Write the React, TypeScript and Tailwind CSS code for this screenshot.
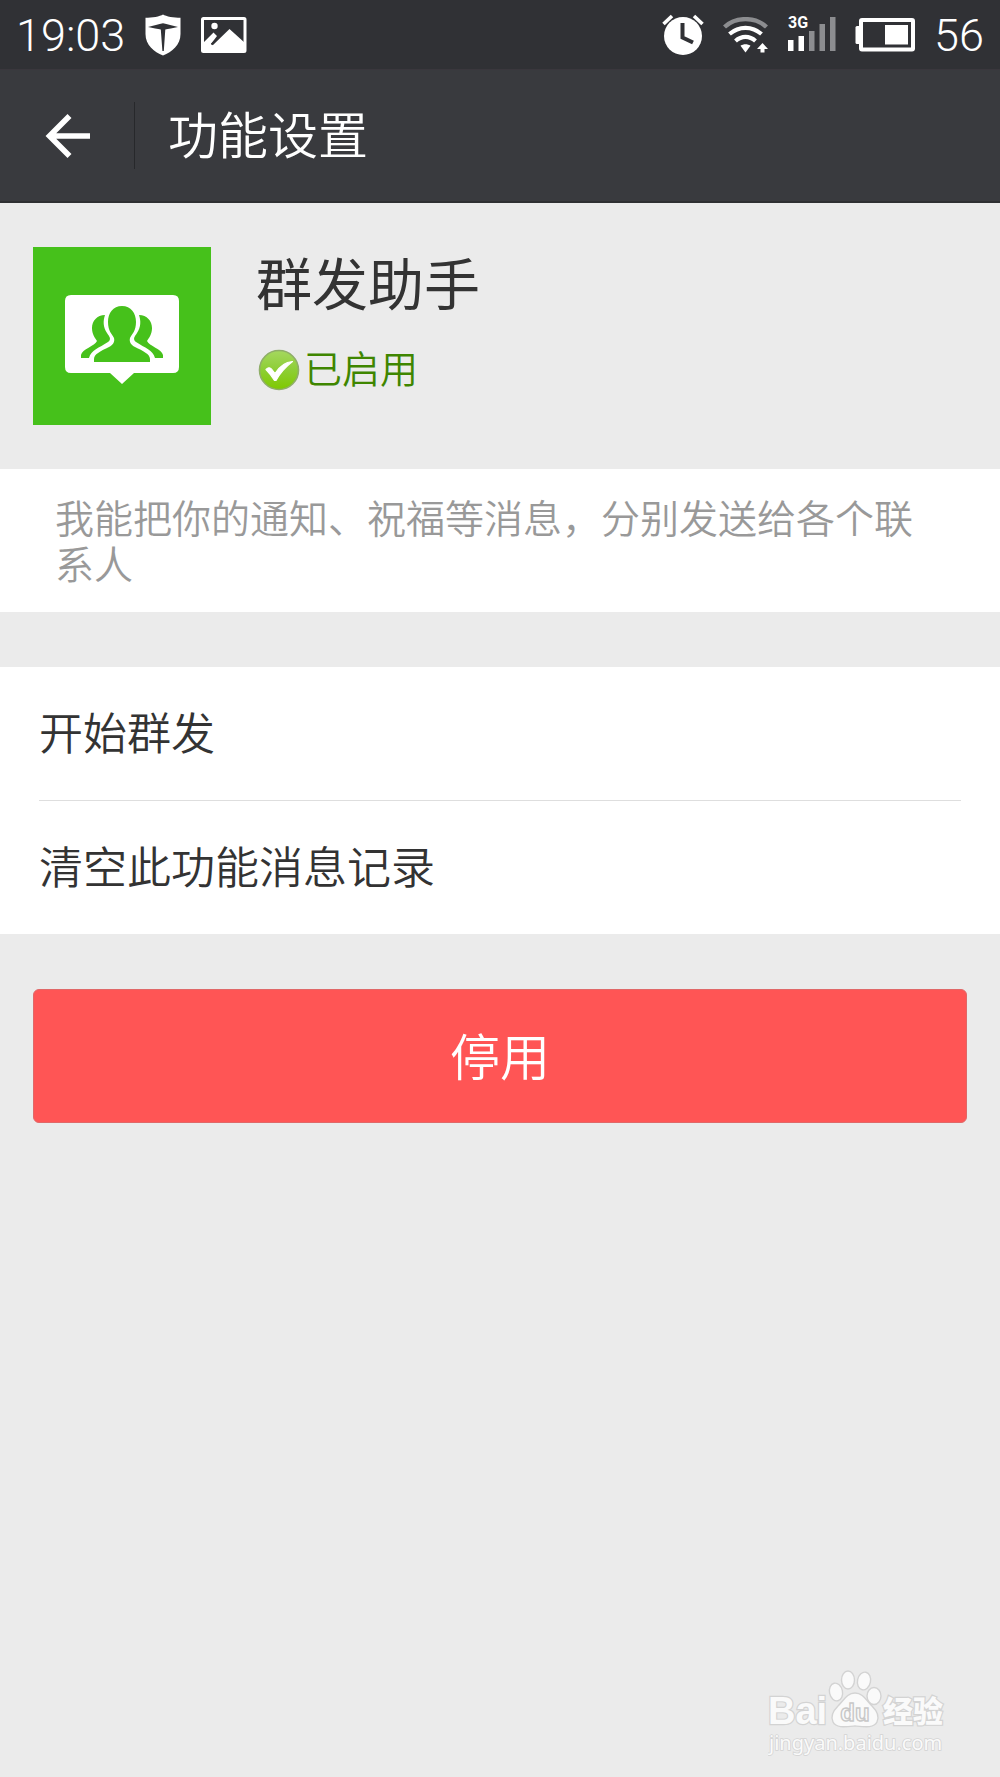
import React from 'react';

interface MenuItem {
  id: string;
  label: string;
}

const menuItems: MenuItem[] = [
  { id: 'start', label: '开始群发' },
  { id: 'clear', label: '清空此功能消息记录' },
];

const ShieldIcon = () => (
  <svg className="h-[42px] w-9" viewBox="0 0 36 42" fill="none">
    <path d="M18 0.5C21 2.5 29 3.8 35.5 3.8V20C35.5 31 27 38 18 41.5C9 38 0.5 31 0.5 20V3.8C7 3.8 15 2.5 18 0.5Z" fill="#fff" />
    <path d="M3 13C8 11.5 14 10.2 18 9.2C22 10.2 28 11.5 33 13C28 14.2 23 15 20.3 15.6L18.8 37H17.4L15.8 15.6C13 15 8 14.2 3 13Z" fill="#303135" />
  </svg>
);

const PictureIcon = () => (
  <svg className="h-9 w-[46px]" viewBox="0 0 46 36" fill="none">
    <rect x="1.5" y="1.5" width="42.5" height="33" rx="1" stroke="#fff" strokeWidth="3" />
    <circle cx="13.5" cy="9" r="3.2" fill="#fff" />
    <path d="M2 26L12.5 15.5L16 19L10 27L12 28L28.5 12L44 26V34H2Z" fill="#fff" />
    <path d="M10.5 27.5L18 20" stroke="#303135" strokeWidth="1.8" />
  </svg>
);

const AlarmIcon = () => (
  <svg className="h-[42px] w-[42px]" viewBox="0 0 42 42" fill="none">
    <circle cx="21" cy="22" r="19" fill="#fff" />
    <path d="M1.5 10L10 2M32 2L40.5 10" stroke="#fff" strokeWidth="3.6" />
    <path d="M20.5 9V23.5L31 28.5" stroke="#303135" strokeWidth="4" />
  </svg>
);

const WifiIcon = () => (
  <svg className="h-9 w-[46px]" viewBox="0 0 46 36" fill="none">
    <path d="M1.5 10C13 -0.5 32 -0.5 43.5 10" stroke="#8c8d90" strokeWidth="4.4" />
    <path d="M6.5 17C16 8.8 29 8.8 38.5 17" stroke="#fff" strokeWidth="4.2" />
    <path d="M12.5 24C18.5 18.6 26.5 18.6 32.5 24" stroke="#fff" strokeWidth="4.2" />
    <path d="M17.5 28.8C20.5 26.8 24.5 26.8 27.5 28.8L22.5 35.5Z" fill="#fff" />
    <path d="M39.5 26L45 32H41.5V35.5H37.5V32H34Z" fill="#fff" />
  </svg>
);

const SignalIcon = () => (
  <svg className="h-12 w-12" viewBox="0 -4 48 48" fill="none">
    <text x="0" y="13" fill="#fff" fontFamily="'Roboto', sans-serif" fontSize="16" fontWeight="700">3G</text>
    <path d="M0 25H5.5V36H0ZM10.5 21H16V36H10.5Z" fill="#fff" />
    <path d="M21 16H26.5V36H21ZM31.5 9H37V36H31.5ZM42 2H47.5V36H42Z" fill="#8c8d90" />
  </svg>
);

const BatteryIcon = () => (
  <svg className="h-[34px] w-[60px]" viewBox="0 0 60 34" fill="none">
    <rect x="6" y="2" width="52" height="29.5" rx="1" stroke="#fff" strokeWidth="4" />
    <path d="M0.5 9.5Q0.5 8 2 8H5V26H2Q0.5 26 0.5 24.5Z" fill="#fff" />
    <path d="M30 7H53V26.5H30Z" fill="#fff" />
  </svg>
);

const StatusBar = () => (
  <div className="flex h-[70px] items-center justify-between border-b border-[#3a373d] bg-[#303135] px-4 font-['Roboto',sans-serif] text-[45px] leading-none font-light text-white">
    <div className="flex items-center gap-5">
      <span className="pt-0.5">19:03</span>
      <ShieldIcon />
      <PictureIcon />
    </div>
    <div className="flex items-center gap-[19px]">
      <AlarmIcon />
      <WifiIcon />
      <SignalIcon />
      <BatteryIcon />
      <span className="pt-0.5">56</span>
    </div>
  </div>
);

const Header = () => (
  <header className="flex h-[133px] items-center border-b-2 border-[#2e2f32] bg-[#393a3e]">
    <button type="button" aria-label="返回" className="flex h-full w-[134px] items-center justify-center">
      <svg className="h-[46px] w-[46px]" viewBox="0 0 46 46" fill="none">
        <path d="M25.5 3L5.5 23L25.5 43M6 23H46" stroke="#fff" strokeWidth="5.6" />
      </svg>
    </button>
    <div className="h-[67px] w-px bg-[#27282b]" />
    <h1 className="pb-2 pl-[33px] text-[50px] leading-none font-[350] text-white">功能设置</h1>
  </header>
);

const GroupIcon = () => (
  <svg className="h-[178px] w-[178px] shrink-0 bg-[#46c11b]" viewBox="0 0 178 178">
    <path d="M38 48H140Q146 48 146 54V120Q146 126 140 126H101L89 137L77 126H38Q32 126 32 120V54Q32 48 38 48Z" fill="#fff" />
    <g fill="#46c11b">
      <path d="M72 68C64 68 59 74 59 81C59 87 62 91 64 94C62 99 49 102 48 108V111H56C58 103 66 101 75 95C79 92 76 89 74 86C70 80 70 74 72 68Z" />
      <path d="M106 68C114 68 119 74 119 81C119 87 116 91 114 94C116 99 129 102 130 108V111H122C120 103 112 101 103 95C99 92 102 89 104 86C108 80 108 74 106 68Z" />
      <path d="M89 59C80 59 75 66 75 75C75 84 79 87 81 91C82 95 80 98 76 100C68 104 61 107 61 112V115H117V112C117 107 110 104 102 100C98 98 96 95 97 91C99 87 103 84 103 75C103 66 98 59 89 59Z" />
    </g>
  </svg>
);

const CheckIcon = () => (
  <svg className="h-[42px] w-[42px]" viewBox="0 0 42 42" fill="none">
    <defs>
      <linearGradient id="checkFill" x1="0" y1="0" x2="0" y2="1">
        <stop offset="0" stopColor="#a5d85f" />
        <stop offset="0.5" stopColor="#8dce35" />
        <stop offset="1" stopColor="#7fc900" />
      </linearGradient>
    </defs>
    <circle cx="21" cy="21" r="19.5" fill="url(#checkFill)" stroke="#8fae68" strokeWidth="1.6" />
    <path d="M8 20.5C10 18.5 12 18 13.5 20L17 24.5C21 18 27 13 34.5 12.5C28 17.5 22 24 18 31.5H16.5C14 27.5 11.5 24 8 20.5Z" fill="#fff" stroke="#fff" strokeWidth="1.2" strokeLinejoin="round" />
  </svg>
);

const Watermark = () => (
  <svg className="h-[92px] w-[180px]" viewBox="0 0 180 92" fill="#fafafa" stroke="#d3d3d3" strokeWidth="1.4">
    <text x="0" y="55" fontFamily="'Liberation Sans', Arial, sans-serif" fontSize="38" fontWeight="700" strokeWidth="2.4" paintOrder="stroke">Bai</text>
    <ellipse cx="68" cy="23" rx="6.5" ry="9" transform="rotate(-12 68 23)" />
    <ellipse cx="80" cy="11" rx="6.5" ry="9" />
    <ellipse cx="96" cy="12" rx="6.5" ry="9" transform="rotate(12 96 12)" />
    <ellipse cx="106" cy="27" rx="7" ry="8.5" />
    <path d="M87 24C95 24 98 31 104 37C109 42 112 47 109 53C106 59 98 58 87 57C76 58 68 59 65 53C62 47 65 42 70 37C76 31 79 24 87 24Z" />
    <text x="87" y="52" textAnchor="middle" fontFamily="'Liberation Sans', Arial, sans-serif" fontSize="24" fontWeight="700" stroke="#c8c8c8">du</text>
    <text x="115" y="53" fontFamily="'Noto Sans CJK SC', sans-serif" fontSize="30" fontWeight="900" strokeWidth="2.4" paintOrder="stroke">经验</text>
    <text x="1" y="81" fontFamily="'Noto Sans', sans-serif" fontSize="20" strokeWidth="1.6" paintOrder="stroke">jingyan.baidu.com</text>
  </svg>
);

const App: React.FC = () => {
  return (
    <div className="flex min-h-screen flex-col bg-[#ebebeb] font-['Noto_Sans_CJK_SC',sans-serif] text-[#333333]">
      <StatusBar />
      <Header />

      <main className="flex grow flex-col">
        <section className="flex gap-[45px] px-[33px] py-11">
          <GroupIcon />
          <div className="flex flex-col gap-5">
            <h2 className="text-[56px] leading-[68px]">群发助手</h2>
            <p className="flex items-center gap-1 pl-0.5 text-[38px] leading-[64px] font-[350] text-[#3f8600]">
              <CheckIcon />
              <span className="pb-1.5">已启用</span>
            </p>
          </div>
        </section>

        <p className="bg-white px-[55px] pt-6 pb-[27px] text-[39px] leading-[46px] font-[350] text-[#999999]">
          我能把你的通知、祝福等消息，分别发送给各个联系人
        </p>

        <ul className="mt-[55px] bg-white px-[39px]">
          {menuItems.map((item) => (
            <li key={item.id} className="border-t border-[#dedede] first:border-t-0">
              <button type="button" className="h-[133px] w-full pb-1.5 text-left text-[44px] leading-none font-[350]">
                {item.label}
              </button>
            </li>
          ))}
        </ul>

        <div className="px-[33px] pt-[55px]">
          <button type="button" className="h-[134px] w-full rounded-md border border-[#e06868] bg-[#ff5555] pb-1 text-[50px] leading-none font-[350] text-white">
            停用
          </button>
        </div>

        <footer className="mt-auto flex justify-end pr-[52px] pb-4">
          <Watermark />
        </footer>
      </main>
    </div>
  );
};

export default App;
